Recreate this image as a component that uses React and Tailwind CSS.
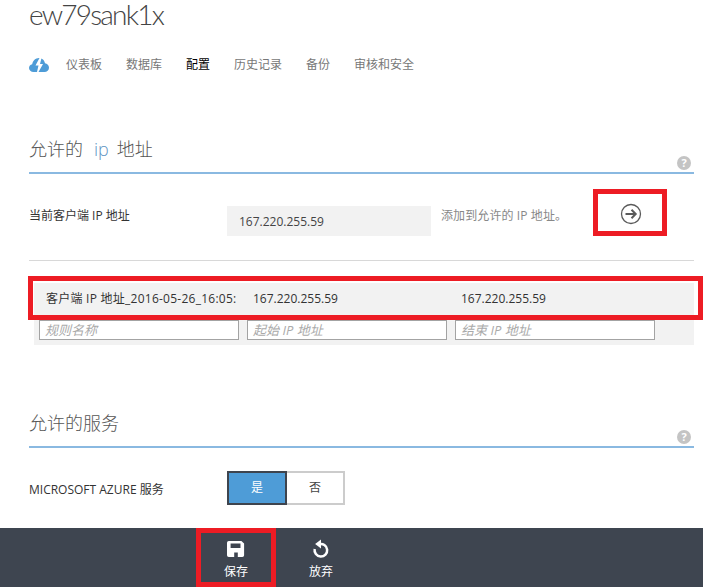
const sans = { fontFamily: '"Open Sans", "Noto Sans CJK SC", sans-serif' }

function HelpIcon() {
  return (
    <span className="absolute right-[3px] bottom-[2px] w-[14px] h-[14px] rounded-full bg-[#c4c4c4] text-white text-[11px] font-bold leading-[14px] text-center">?</span>
  )
}

function SectionTitle({ children }) {
  return (
    <div className="relative h-[36px] border-b-2 border-[#8ab9e1] text-[18px] font-light leading-[22px] text-[#555]">
      {children}
      <HelpIcon />
    </div>
  )
}

function CloudLogo() {
  return (
    <svg width="20" height="14" viewBox="0 0 20 14">
      <path fill="#4e9cd7" d="M4.500 14C2 14 0 12.200 0 10c0-1.900 1.300-3.400 3.200-3.800C3.800 2.800 6.500 0 10 0c3.200 0 5.500 2.300 6 5.200 2.200 0.300 4 2.200 4 4.500 0 2.400-2 4.300-4.500 4.300z" />
      <path fill="#fff" d="M10.500 0L6.500 7.500h3L8 14l1.500 0 4.500-8h-3l1.500-6z" />
    </svg>
  )
}

function ArrowCircle() {
  return (
    <svg width="22" height="22" viewBox="0 0 22 22" fill="none" stroke="#5a5a5a">
      <circle cx="11" cy="11" r="9.500" strokeWidth="1.300" />
      <path d="M5.500 11h10M11.500 6.800l4.200 4.200-4.200 4.200" strokeWidth="2" />
    </svg>
  )
}

function SaveIcon() {
  return (
    <svg width="18" height="18" viewBox="0 0 20 20">
      <path fill="#fff" fillRule="evenodd" d="M2 1h14l3 3v13a2 2 0 0 1-2 2H2a2 2 0 0 1-2-2V3a2 2 0 0 1 2-2zM4 4v5h11V4zM8 14v5h4v-5z" />
    </svg>
  )
}

function UndoIcon() {
  return (
    <svg width="18" height="19" viewBox="0 0 20 20" fill="none">
      <path stroke="#fff" strokeWidth="2.800" d="M8 5.200a7 7 0 1 1-5 5.300" />
      <path fill="#fff" d="M10 0v10L3.500 5z" />
    </svg>
  )
}

function RuleInput({ placeholder }) {
  return (
    <div className="w-[200px] h-[20px] bg-white border border-[#a3a3a3] pl-[5px] text-[13px] italic leading-[19px] text-[#aaa]">{placeholder}</div>
  )
}

export default function App() {
  const tabs = ['仪表板', '数据库', '配置', '历史记录', '备份', '审核和安全']
  return (
    <div style={sans} className="w-[703px] h-[587px] bg-white flex flex-col overflow-hidden">
      <div className="flex-1 pl-[29px] pr-[9px]">
        <h1 style={{ fontFamily: 'Lato, sans-serif' }} className="h-[39px] text-[28px] font-light leading-[28px] tracking-[-1.8px] text-[#444]">ew79sank1x</h1>

        <div className="mt-[18px] h-[16px] flex items-center gap-6 text-[12px] text-[#777]">
          <span className="mr-[-7px] flex"><CloudLogo /></span>
          {tabs.map(t => (
            <span key={t} className={t === '配置' ? 'text-black' : ''}>{t}</span>
          ))}
        </div>

        <div className="mt-[65px]">
          <SectionTitle>允许的<span className="ml-[11px] text-[#5f95c4]">ip</span><span className="ml-[8px]">地址</span></SectionTitle>
        </div>

        <div className="mt-[32px] flex items-start text-[12px]">
          <div className="w-[198px] pt-[1px] leading-[18px] text-[#333]">当前客户端 IP 地址</div>
          <div className="w-[204px] h-[30px] bg-[#f2f2f2] pl-[12px] leading-[32px] text-[#444]">167.220.255.59</div>
          <div className="ml-[10px] pt-[1px] leading-[18px] text-[#888] tracking-[0.1px]">添加到允许的 IP 地址。</div>
          <div className="relative ml-[53px] w-[22px] h-[22px] mt-[-3px]">
            <ArrowCircle />
            <div className="absolute left-[-27px] top-[-14px] w-[74px] h-[47px] border-[5px] border-[#ed1c24]" />
          </div>
        </div>

        <div className="mt-[24px] border-t border-[#d8d8d8]" />

        <div className="relative mt-[22px] ml-[5px] h-[62px] bg-[#f2f2f2] text-[12px] text-[#333]">
          <div className="h-[32px] flex items-center pl-[12px]">
            <span className="w-[207px] whitespace-nowrap tracking-[0.25px]">客户端 IP 地址_2016-05-26_16:05:</span>
            <span className="w-[208px]">167.220.255.59</span>
            <span>167.220.255.59</span>
          </div>
          <div className="mt-[5px] pl-[5px] flex gap-2">
            <RuleInput placeholder="规则名称" />
            <RuleInput placeholder="起始 IP 地址" />
            <RuleInput placeholder="结束 IP 地址" />
          </div>
          <div className="absolute left-[-6px] top-[-7px] w-[675px] h-[44px] border-[5px] border-[#ed1c24]" />
        </div>

        <div className="mt-[67px]">
          <SectionTitle>允许的服务</SectionTitle>
        </div>

        <div className="mt-[23px] flex items-center text-[12px]">
          <div className="w-[198px] pt-[4px] text-[#333]">MICROSOFT AZURE 服务</div>
          <div className="flex h-[34px]">
            <div className="w-[60px] border-2 border-[#3e444e] bg-[#4e9cd7] text-white text-center leading-[30px]">是</div>
            <div className="w-[58px] border-2 border-l-0 border-[#cccccc] text-[#444] text-center leading-[30px]">否</div>
          </div>
        </div>
      </div>

      <div className="h-[59px] bg-[#3e4550] flex text-white text-[12px] pl-[196px]">
        <div className="relative w-[80px] flex flex-col items-center pt-[12px]">
          <SaveIcon />
          <span className="mt-[6px] leading-[16px]">保存</span>
          <div className="absolute inset-0 border-[5px] border-[#ed1c24]" />
        </div>
        <div className="ml-[5px] w-[80px] flex flex-col items-center pt-[11px]">
          <UndoIcon />
          <span className="mt-[6px] leading-[16px]">放弃</span>
        </div>
      </div>
    </div>
  )
}
